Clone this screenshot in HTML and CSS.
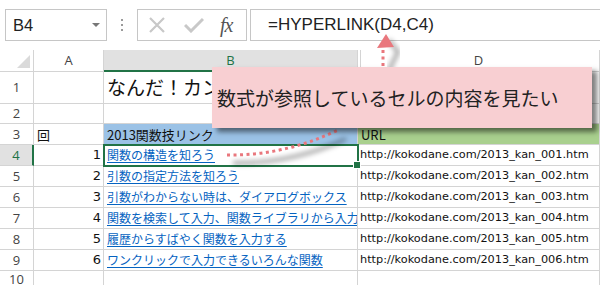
FILE: index.html
```html
<!DOCTYPE html>
<html lang="ja">
<head>
  <meta charset="UTF-8">
  <title>HYPERLINK</title>
  <link rel="stylesheet" href="styles.css">
</head>
<body>
  <div class="sheet">
    <div class="formula-bar">
      <div class="name-box">
        <span class="name-text">B4</span>
        <span class="caret"></span>
      </div>
      <div class="grip"><i></i><i></i><i></i></div>
      <div class="fx-buttons">
        <svg class="btn-icon" width="18" height="16" viewBox="0 0 18 16">
          <path d="M2 1 L16 15 M16 1 L2 15" stroke="#c8c8c8" stroke-width="2.2" fill="none"/>
        </svg>
        <svg class="btn-icon" width="20" height="16" viewBox="0 0 20 16">
          <path d="M1 8 L7 14 L19 2" stroke="#c8c8c8" stroke-width="3" fill="none"/>
        </svg>
        <span class="fx">fx</span>
      </div>
      <div class="formula">=HYPERLINK(D4,C4)</div>
    </div>

    <div class="grid">
      <div class="cell corner"><span class="corner-mark"></span></div>
      <div class="cell col-head">A</div>
      <div class="cell col-head selected">B</div>
      <div class="cell col-head hidden-left">D</div>

      <div class="cell row-head">1</div>
      <div class="cell"></div>
      <div class="cell title">なんだ！カンタン！Excel塾</div>
      <div class="cell no-left"></div>

      <div class="cell row-head">2</div>
      <div class="cell"></div>
      <div class="cell"></div>
      <div class="cell"></div>

      <div class="cell row-head">3</div>
      <div class="cell heading">回</div>
      <div class="cell heading blue">2013関数技リンク</div>
      <div class="cell heading green">URL</div>

      <div class="cell row-head active-row">4</div>
      <div class="cell num">1</div>
      <div class="cell active"><span class="link">関数の構造を知ろう</span></div>
      <div class="cell url">http://kokodane.com/2013_kan_001.htm</div>

      <div class="cell row-head">5</div>
      <div class="cell num">2</div>
      <div class="cell"><span class="link">引数の指定方法を知ろう</span></div>
      <div class="cell url">http://kokodane.com/2013_kan_002.htm</div>

      <div class="cell row-head">6</div>
      <div class="cell num">3</div>
      <div class="cell"><span class="link">引数がわからない時は、ダイアログボックス</span></div>
      <div class="cell url">http://kokodane.com/2013_kan_003.htm</div>

      <div class="cell row-head">7</div>
      <div class="cell num">4</div>
      <div class="cell"><span class="link">関数を検索して入力、関数ライブラリから入力</span></div>
      <div class="cell url">http://kokodane.com/2013_kan_004.htm</div>

      <div class="cell row-head">8</div>
      <div class="cell num">5</div>
      <div class="cell"><span class="link">履歴からすばやく関数を入力する</span></div>
      <div class="cell url">http://kokodane.com/2013_kan_005.htm</div>

      <div class="cell row-head">9</div>
      <div class="cell num">6</div>
      <div class="cell"><span class="link">ワンクリックで入力できるいろんな関数</span></div>
      <div class="cell url">http://kokodane.com/2013_kan_006.htm</div>

      <div class="cell row-head">10</div>
      <div class="cell"></div>
      <div class="cell"></div>
      <div class="cell"></div>
    </div>

    <svg class="arrow" width="600" height="285" viewBox="0 0 600 285">
      <defs>
        <filter id="soft" x="-20%" y="-50%" width="140%" height="200%">
          <feGaussianBlur stdDeviation="2.5"/>
        </filter>
      </defs>
      <path d="M233 163 Q291 164 346 139" stroke="#000" stroke-opacity="0.35" stroke-width="4" fill="none" filter="url(#soft)"/>
      <path d="M389 40 L398 52 L389 70" stroke="#000" stroke-opacity="0.35" stroke-width="4" fill="none" filter="url(#soft)"/>
      <path d="M227 155 Q285 156 340 129" stroke="#e9777d" stroke-width="3" stroke-dasharray="3 3.5" fill="none"/>
      <path d="M383 66 L383 49" stroke="#e9777d" stroke-width="3" stroke-dasharray="3 3.5" fill="none"/>
      <polygon points="386,34 377,48 394,47" fill="#e9777d"/>
    </svg>

    <div class="callout">数式が参照しているセルの内容を見たい</div>
  </div>
</body>
</html>
```

FILE: styles.css
```css
* {
  margin: 0;
  padding: 0;
  box-sizing: border-box;
}

body {
  width: 600px;
  height: 285px;
  overflow: hidden;
  background: #ffffff;
  font-family: 'Noto Sans CJK JP', 'Liberation Sans', sans-serif;
  color: #111;
}

.sheet {
  position: relative;
  width: 600px;
  height: 285px;
  overflow: hidden;
}

/* formula bar */

.formula-bar {
  display: flex;
  height: 41px;
  padding: 9px 0 0 5px;
  margin-bottom: 9px;
  font-family: 'Liberation Sans', sans-serif;
}

.name-box {
  width: 102px;
  height: 32px;
  border: 1px solid #c6c6c6;
  display: flex;
  align-items: center;
  justify-content: space-between;
  padding: 0 6px 0 7px;
}

.name-text {
  font-size: 16.5px;
  color: #222;
}

.caret {
  width: 0;
  height: 0;
  border-left: 4px solid transparent;
  border-right: 4px solid transparent;
  border-top: 4px solid #777;
}

.grip {
  width: 30px;
  display: flex;
  flex-direction: column;
  align-items: center;
  justify-content: center;
  gap: 3px;
}

.grip i {
  width: 2px;
  height: 2px;
  background: #9a9a9a;
}

.fx-buttons {
  width: 110px;
  height: 32px;
  border: 1px solid #c6c6c6;
  margin-right: 3px;
  display: flex;
  align-items: center;
  padding-left: 10px;
  gap: 18px;
}

.fx {
  font-family: 'Liberation Serif', serif;
  font-style: italic;
  font-size: 20px;
  color: #555;
  margin-left: -2px;
  letter-spacing: -1px;
}

.formula {
  flex: 1;
  height: 32px;
  border-top: 1px solid #c6c6c6;
  border-bottom: 1px solid #c6c6c6;
  border-left: 1px solid #c6c6c6;
  padding-left: 17px;
  font-size: 17px;
  line-height: 30px;
  color: #222;
}

/* grid */

.grid {
  display: grid;
  grid-template-columns: 34px 70px 254px 1fr;
  grid-template-rows: 22px 32px 20px repeat(7, 21px);
}

.cell {
  border-right: 1px solid #d4d4d4;
  border-bottom: 1px solid #d4d4d4;
  display: flex;
  align-items: flex-end;
  padding: 0 2px 2px 3px;
  font-size: 12px;
  line-height: 17px;
  white-space: nowrap;
  overflow: hidden;
}

.heading {
  font-size: 13px;
  padding-bottom: 1px;
}

.corner {
  justify-content: flex-end;
  padding: 0 3px 3px 0;
}

.corner-mark {
  width: 0;
  height: 0;
  border-left: 13px solid transparent;
  border-bottom: 13px solid #dadada;
}

.col-head {
  justify-content: center;
  align-items: center;
  padding: 0;
  font-family: 'Open Sans', sans-serif;
  font-size: 13px;
  color: #444;
}

.col-head.selected {
  background: #e1e1e1;
  color: #217346;
  border-bottom: 2px solid #217346;
}

.col-head.hidden-left {
  box-shadow: inset 2px 0 0 #fff, inset 3px 0 0 #d4d4d4;
}

.row-head {
  justify-content: center;
  align-items: center;
  padding: 0;
  font-family: 'Open Sans', sans-serif;
  font-size: 13px;
  color: #444;
}

.row-head.active-row {
  background: #e1e1e1;
  color: #217346;
  border-right: 2px solid #217346;
}

.title {
  font-size: 19px;
  line-height: 24px;
  padding-bottom: 4px;
  overflow: visible;
  border-right: none;
}

.blue {
  background: #9bc2e6;
}

.green {
  background: #a9d08e;
}

.num {
  justify-content: flex-end;
  font-family: 'DejaVu Sans', sans-serif;
  font-size: 13px;
}

.url {
  font-family: 'DejaVu Sans', sans-serif;
  font-size: 11.3px;
  padding-left: 2px;
}

.link {
  color: #0563c1;
  text-decoration: underline;
  text-underline-offset: 2px;
}

.active {
  position: relative;
  overflow: visible;
  outline: 2px solid #217346;
  outline-offset: -1px;
}

.active::after {
  content: "";
  position: absolute;
  right: -4px;
  bottom: -4px;
  width: 6px;
  height: 6px;
  background: #217346;
  border: 1px solid #fff;
}

/* overlays */

.arrow {
  position: absolute;
  top: 0;
  left: 0;
  pointer-events: none;
}

.callout {
  position: absolute;
  left: 212px;
  top: 67px;
  width: 380px;
  height: 61px;
  background: #f8cfd2;
  box-shadow: 5px 4px 5px rgba(0, 0, 0, 0.5);
  display: flex;
  align-items: center;
  padding-left: 5px;
  font-size: 19px;
  color: #222;
}
```
